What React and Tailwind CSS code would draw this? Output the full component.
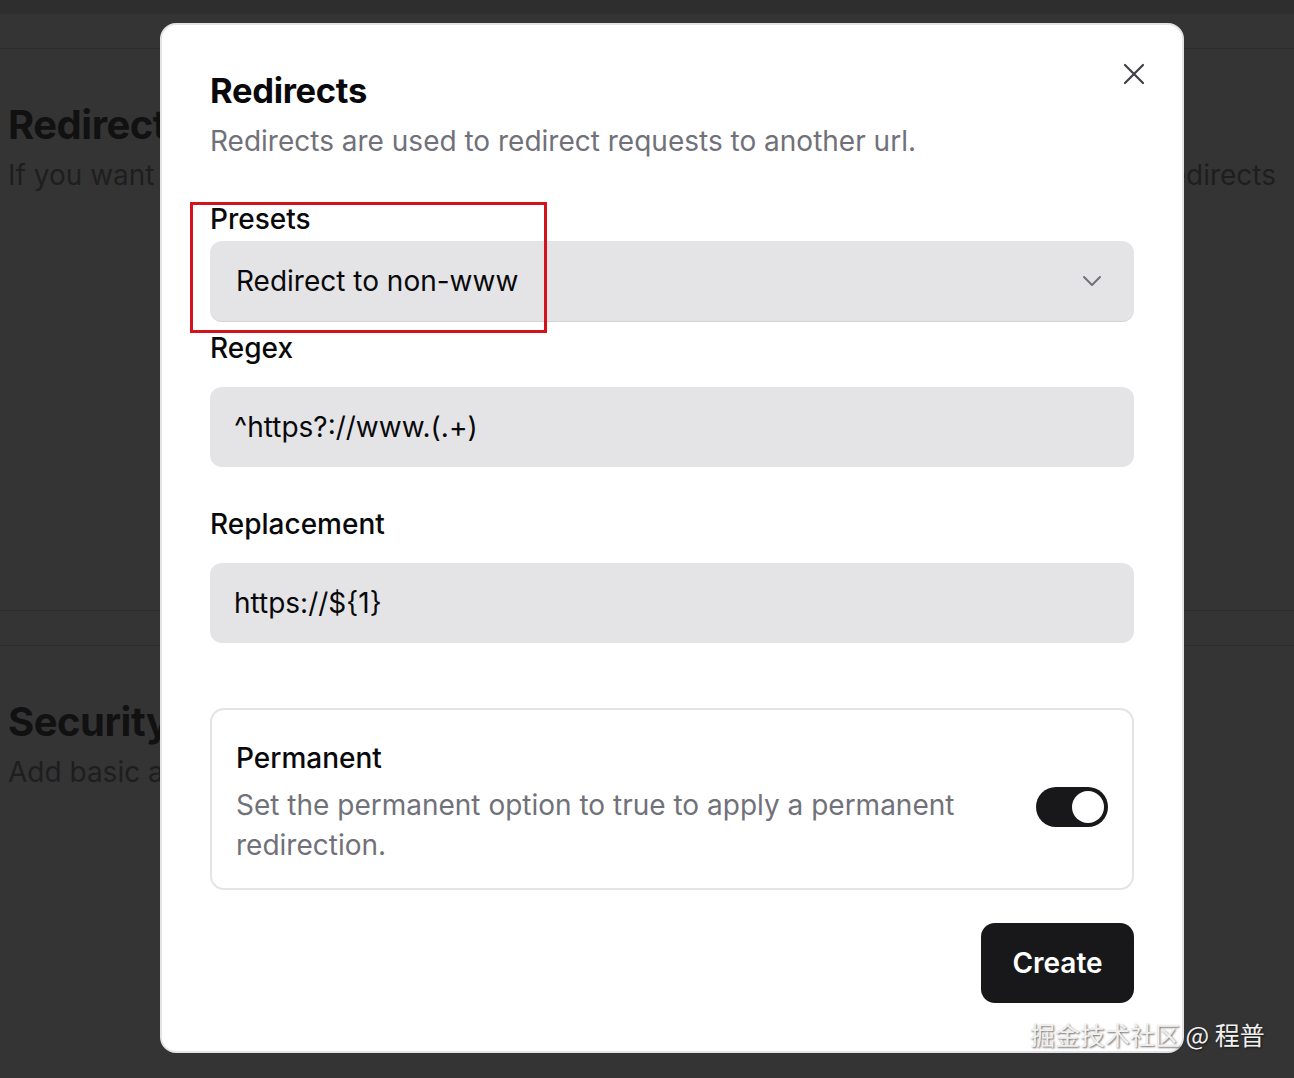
import React from "react";

export default function App() {
  return (
    <div
      className="relative w-[1294px] h-[1078px] overflow-hidden bg-[#343435]"
      style={{ fontFamily: "Inter, 'Noto Sans', sans-serif" }}
    >
      {/* background page (dimmed) */}
      <div className="h-[14px] bg-[#2e2e2f]" />
      <div className="h-[35px] border-b border-[#2c2c2d]" />
      <div className="flex justify-between px-[8px] pt-[52px] h-[562px] border-b border-[#2c2c2d]">
        <div>
          <div className="text-[40px] font-bold leading-[48px] text-[#111112] tracking-[-0.5px]">Redirects</div>
          <div className="mt-[6px] text-[28px] leading-[40px] text-[#1e1e1f]">If you want to redirect</div>
        </div>
        <div className="pt-[54px] pr-[10px]">
          <div className="text-[28px] leading-[40px] text-[#1e1e1f]">Redirects</div>
        </div>
      </div>
      <div className="h-[35px] border-b border-[#2c2c2d]" />
      <div className="px-[8px] pt-[52px]">
        <div className="text-[40px] font-bold leading-[48px] text-[#111112] tracking-[-0.5px]">Security</div>
        <div className="mt-[6px] text-[28px] leading-[40px] text-[#1e1e1f]">Add basic auth</div>
      </div>

      {/* modal */}
      <div className="absolute left-[160px] top-[23px] w-[1024px] h-[1030px] bg-white rounded-[16px] border-[2px] border-[#e4e4e7] px-[48px] pt-[44px]">
        <button className="absolute right-[36px] top-[37px] text-[#3f3f46]">
          <svg width="24" height="24" viewBox="0 0 24 24" fill="none" stroke="currentColor" strokeWidth="2.2" strokeLinecap="round">
            <path d="M3 3L21 21M21 3L3 21" />
          </svg>
        </button>
        <div className="text-[34.5px] font-bold leading-[44px] text-[#09090b] tracking-[-0.3px]">Redirects</div>
        <div className="mt-[8px] text-[28px] leading-[40px] text-[#71717a]">
          Redirects are used to redirect requests to another url.
        </div>

        <div className="mt-[41px] text-[28px] font-medium leading-[34px] text-[#09090b]">Presets</div>
        <div className="mt-[5px] h-[81px] rounded-[12px] bg-[#e4e4e7] border-b border-[#d4d4d8] flex items-center justify-between pl-[26px] pr-[30px]">
          <span className="text-[28px] text-[#09090b]">Redirect to non-www</span>
          <svg width="24" height="24" viewBox="0 0 24 24" fill="none" stroke="#71717a" strokeWidth="2" strokeLinecap="round" strokeLinejoin="round">
            <path d="M4 8l8 8 8-8" />
          </svg>
        </div>

        <div className="mt-[9px] text-[28px] font-medium leading-[34px] text-[#09090b]">Regex</div>
        <div className="mt-[22px] h-[80px] rounded-[12px] bg-[#e4e4e7] flex items-center pl-[24px]">
          <span className="text-[28px] text-[#09090b]">^https?://www.(.+)</span>
        </div>

        <div className="mt-[40px] text-[28px] font-medium leading-[34px] text-[#09090b]">Replacement</div>
        <div className="mt-[22px] h-[80px] rounded-[12px] bg-[#e4e4e7] flex items-center pl-[24px]">
          <span className="text-[28px] text-[#09090b]">https://${"{1}"}</span>
        </div>

        <div className="mt-[65px] h-[182px] rounded-[14px] border-[2px] border-[#e4e4e7] flex items-start justify-between pl-[24px] pr-[24px] pt-[28px]">
          <div>
            <div className="text-[28px] font-medium leading-[40px] text-[#09090b]">Permanent</div>
            <div className="mt-[7px] w-[740px] text-[28px] leading-[40px] text-[#71717a]">
              Set the permanent option to true to apply a permanent redirection.
            </div>
          </div>
          <div className="mt-[49px] w-[72px] h-[40px] rounded-full bg-[#18181b] flex items-center justify-end pr-[4px]">
            <div className="w-[32px] h-[32px] rounded-full bg-white" />
          </div>
        </div>

        <div className="mt-[33px] flex justify-end">
          <button className="w-[153px] h-[80px] rounded-[14px] bg-[#18181b] text-white text-[28px] font-semibold">
            Create
          </button>
        </div>
      </div>

      {/* red highlight */}
      <div className="absolute left-[190px] top-[202px] w-[357px] h-[131px] border-[3px] border-[#d5121c]" />

      {/* watermark */}
      <div
        className="absolute left-[1030px] top-[1016px] text-[25px] leading-[36px] text-[#f0f0f0]"
        style={{ fontFamily: "'Noto Sans CJK SC', sans-serif", textShadow: "1px 1px 2px rgba(0,0,0,0.6)" }}
      >
        掘金技术社区 @ 程普
      </div>
    </div>
  );
}
